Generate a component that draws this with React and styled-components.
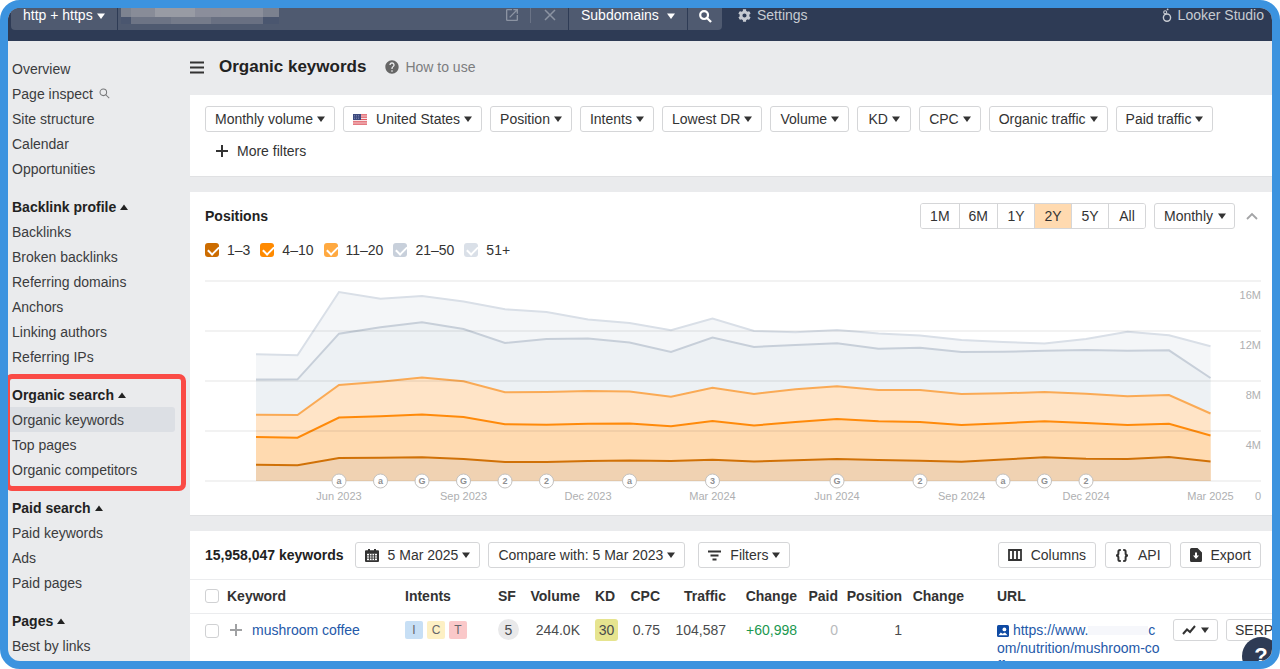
import React, { useState } from "react";
import styled, { createGlobalStyle, css } from "styled-components";
import { MdHelp, MdOpenInNew } from "react-icons/md";
import { FaCog } from "react-icons/fa";

const navGroups = [
  {
    items: [
      "Overview",
      "Page inspect",
      "Site structure",
      "Calendar",
      "Opportunities",
    ],
  },
  {
    title: "Backlink profile",
    items: [
      "Backlinks",
      "Broken backlinks",
      "Referring domains",
      "Anchors",
      "Linking authors",
      "Referring IPs",
    ],
  },
  {
    title: "Organic search",
    marked: true,
    items: ["Organic keywords", "Top pages", "Organic competitors"],
  },
  { title: "Paid search", items: ["Paid keywords", "Ads", "Paid pages"] },
  { title: "Pages", items: ["Best by links"] },
];

const filters = [
  "Monthly volume",
  "United States",
  "Position",
  "Intents",
  "Lowest DR",
  "Volume",
  "KD",
  "CPC",
  "Organic traffic",
  "Paid traffic",
];

const ranges = ["1M", "6M", "1Y", "2Y", "5Y", "All"];

// heights above the baseline, one value for each month
const series = [
  {
    label: "51+",
    box: "#dae0e8",
    line: "#d9dfe7",
    fill: "#f4f6f8",
    values: [
      126.7, 125.7, 189, 182.3, 185, 179.5, 171.7, 169, 161.5, 158, 150.7,
      162.5, 150, 148.7, 151, 147.5, 145.5, 141, 139, 137.5, 142, 149.3, 145.7,
      134.7,
    ],
  },
  {
    label: "21–50",
    box: "#c8d0db",
    line: "#c7cfd9",
    fill: "#edf1f4",
    values: [
      101.5, 101.7, 147.3, 153.7, 158.8, 152, 138, 142, 142.5, 138.5, 129,
      143.5, 134, 136, 137.7, 132.2, 133.3, 129, 129.2, 130.3, 131, 130.2,
      130.7, 103,
    ],
  },
  {
    label: "11–20",
    box: "#ffa940",
    line: "#faaa55",
    fill: "#ffe4c7",
    values: [
      66.3, 66, 96, 99.3, 103.5, 99.7, 88.8, 89, 90, 89.5, 84.3, 93.3, 87, 91.7,
      94.7, 91, 91, 87, 87.7, 89, 87.3, 84.7, 86, 67.5,
    ],
  },
  {
    label: "4–10",
    box: "#ff8a00",
    line: "#ff8a0a",
    fill: "#ffdab0",
    values: [
      44, 43.3, 63.5, 64.7, 66.5, 64, 56.8, 56.2, 57.3, 57.5, 54.8, 60, 55.5,
      59, 62, 59.7, 59, 56, 57.8, 59.7, 58, 56, 57.3, 45.5,
    ],
  },
  {
    label: "1–3",
    box: "#cc6c00",
    line: "#d07107",
    fill: "#f0d2b2",
    values: [
      16.2, 15.8, 23, 23.3, 23.7, 22, 19, 19, 20, 20.5, 20, 21.3, 19.5, 20.7,
      22, 21, 20.3, 19.3, 21.5, 23.8, 22.3, 22, 24, 19.5,
    ],
  },
];

const updates = [
  [2, "a"],
  [3, "a"],
  [4, "G"],
  [5, "G"],
  [6, "2"],
  [7, "2"],
  [9, "a"],
  [11, "3"],
  [14, "G"],
  [16, "2"],
  [18, "a"],
  [19, "G"],
  [20, "2"],
];

const months = [
  [2, "Jun 2023"],
  [5, "Sep 2023"],
  [8, "Dec 2023"],
  [11, "Mar 2024"],
  [14, "Jun 2024"],
  [17, "Sep 2024"],
  [20, "Dec 2024"],
  [23, "Mar 2025"],
];

const BASE = 205;
const xOf = (i) => 51 + i * 41.5;

const Caret = ({ up }) => (
  <CaretSvg width="8" height="6" viewBox="0 0 8 6" aria-hidden="true">
    <path d={up ? "M0 6 4 0.5 8 6Z" : "M0 0.5H8L4 6Z"} fill="currentColor" />
  </CaretSvg>
);

const SearchIcon = ({ size, stroke }) => (
  <svg
    width={size}
    height={size}
    viewBox="0 0 14 14"
    fill="none"
    stroke="currentColor"
    strokeWidth={stroke}
    aria-hidden="true"
  >
    <circle cx="5.5" cy="5.5" r="4.2" />
    <path d="M8.6 8.6 13 13" />
  </svg>
);

const PlusIcon = ({ size }) => (
  <svg width={size} height={size} viewBox="0 0 12 12" aria-hidden="true">
    <path d="M6 0v12M0 6h12" stroke="currentColor" strokeWidth="2" />
  </svg>
);

const LookerIcon = () => (
  <svg
    width="10"
    height="14"
    viewBox="0 0 10 14"
    fill="none"
    stroke="currentColor"
    aria-hidden="true"
  >
    <circle cx="5" cy="9.6" r="3.6" strokeWidth="1.4" />
    <circle cx="3.2" cy="4.2" r="1.5" strokeWidth="1.1" />
    <circle cx="5.6" cy="1.4" r="0.9" fill="currentColor" stroke="none" />
  </svg>
);

const FlagIcon = () => (
  <svg width="14" height="11" viewBox="0 0 14 11" aria-hidden="true">
    <rect width="14" height="11" fill="#f7e4e6" />
    <path
      d="M0 .8h14M0 3.2h14M0 5.5h14M0 7.8h14M0 10.2h14"
      stroke="#e0565f"
      strokeWidth="1.2"
    />
    <rect width="8" height="6" fill="#3d4a7f" />
    <path
      d="M1 1.5h6M1 3h6M1 4.5h6"
      stroke="#8e98bd"
      strokeWidth="0.6"
      strokeDasharray="1 1"
    />
  </svg>
);

const CalendarIcon = () => (
  <svg width="14" height="13" viewBox="0 0 14 13" aria-hidden="true">
    <path
      d="M3 0h2v1.2h4V0h2v1.2h2a1 1 0 0 1 1 1V12a1 1 0 0 1-1 1H1a1 1 0 0 1-1-1V2.2a1 1 0 0 1 1-1h2Z"
      fill="currentColor"
    />
    <path d="M2 4.8h10v6.4H2Z" fill="#fff" />
    <path
      d="M2 6.9h10M2 9.1h10M4.5 4.8v6.4M7 4.8v6.4M9.5 4.8v6.4"
      stroke="currentColor"
      strokeWidth="0.9"
    />
  </svg>
);

const FilterIcon = () => (
  <svg width="13" height="11" viewBox="0 0 13 11" aria-hidden="true">
    <path
      d="M0 1.5h13M2.5 5.5h8M4.5 9.5h4"
      stroke="currentColor"
      strokeWidth="2"
    />
  </svg>
);

const ColumnsIcon = () => (
  <svg width="14" height="12" viewBox="0 0 14 12" aria-hidden="true">
    <path
      d="M1 1h12v10H1ZM5 1v10M9 1v10"
      fill="none"
      stroke="currentColor"
      strokeWidth="1.8"
    />
  </svg>
);

const BracesIcon = () => (
  <svg width="14" height="13" viewBox="0 0 14 13" aria-hidden="true">
    <path
      d="M5.8 1H5Q3.4 1 3.4 2.5V4.6Q3.4 6.5 1 6.5Q3.4 6.5 3.4 8.4V10.5Q3.4 12 5 12H5.8M8.2 1H9Q10.6 1 10.6 2.5V4.6Q10.6 6.5 13 6.5Q10.6 6.5 10.6 8.4V10.5Q10.6 12 9 12H8.2"
      fill="none"
      stroke="currentColor"
      strokeWidth="2"
    />
  </svg>
);

const ExportIcon = () => (
  <svg width="12" height="14" viewBox="0 0 12 14" aria-hidden="true">
    <path
      d="M1.5 0H7.5L12 4.5V12.5a1.5 1.5 0 0 1-1.5 1.5H1.5A1.5 1.5 0 0 1 0 12.5V1.5A1.5 1.5 0 0 1 1.5 0Z"
      fill="currentColor"
    />
    <path d="M5 4.5h2V7.5h2L6 11 3 7.5h2Z" fill="#fff" />
  </svg>
);

const PictureIcon = () => (
  <svg width="12" height="12" viewBox="0 0 12 12" aria-hidden="true">
    <rect width="12" height="12" rx="1.5" fill="#0f4aa3" />
    <circle cx="7.4" cy="4.4" r="1.9" fill="#fff" />
    <path d="M1.5 10.2 3.8 7.6l1.7 1.2L8 7.4l2.5 2.8Z" fill="#fff" />
  </svg>
);

const TrendIcon = () => (
  <svg width="14" height="10" viewBox="0 0 14 10" aria-hidden="true">
    <path
      d="M1 9 5 4.5l3 2.5L13 1"
      fill="none"
      stroke="currentColor"
      strokeWidth="2"
    />
  </svg>
);

const Chart = () => (
  <ChartSvg viewBox="0 0 1056 232" role="img" aria-label="Positions by month">
    {series.map((s) => {
      const line = s.values
        .map((v, i) => `${xOf(i)},${(BASE - v).toFixed(1)}`)
        .join(" ");
      return (
        <g key={s.label}>
          <polygon
            points={`${xOf(0)},${BASE} ${line} ${xOf(23)},${BASE}`}
            fill={s.fill}
          />
          <polyline points={line} fill="none" stroke={s.line} strokeWidth="2" />
        </g>
      );
    })}
    {[5, 55, 105, 155, 205].map((y) => (
      <rect key={y} y={y - 1} width="1056" height="2" fill="#000" opacity="0.05" />
    ))}
    {["16M", "12M", "8M", "4M"].map((label, i) => (
      <AxisText key={label} x="1056" y={23 + i * 50} textAnchor="end">
        {label}
      </AxisText>
    ))}
    <AxisText x="1056" y="224" textAnchor="end">
      0
    </AxisText>
    {months.map(([i, label]) => (
      <AxisText key={label} x={xOf(i)} y="224" textAnchor="middle">
        {label}
      </AxisText>
    ))}
    {updates.map(([i, label]) => (
      <g key={i}>
        <circle cx={xOf(i)} cy={BASE} r="7" fill="#fff" stroke="#c3c1bf" />
        <MarkerText x={xOf(i)} y={BASE + 3} textAnchor="middle">
          {label}
        </MarkerText>
      </g>
    ))}
  </ChartSvg>
);

const App = () => {
  const [range, setRange] = useState("2Y");

  return (
    <Frame>
      <GlobalStyle />
      <TopBar>
        <SearchGroup>
          <TopSelectWrap>
            <TopSelect aria-label="Protocol">
              <option>http + https</option>
            </TopSelect>
            <Caret />
          </TopSelectWrap>
          <UrlField>
            <UrlInput type="text" aria-label="Domain or URL" />
            <Redaction>
              <RedactionTop />
              <RedactionBottom />
            </Redaction>
            <FieldButton type="button" aria-label="Open in new tab">
              <MdOpenInNew size={16} />
            </FieldButton>
            <FieldButton type="button" aria-label="Clear" $divided>
              <svg width="12" height="12" viewBox="0 0 12 12">
                <path
                  d="M1 1 11 11M11 1 1 11"
                  stroke="currentColor"
                  strokeWidth="1.5"
                />
              </svg>
            </FieldButton>
          </UrlField>
          <TopSelectWrap>
            <TopSelect aria-label="Mode" $wide>
              <option>Subdomains</option>
            </TopSelect>
            <Caret />
          </TopSelectWrap>
          <SearchButton type="button" aria-label="Search">
            <SearchIcon size={13} stroke={2.4} />
          </SearchButton>
        </SearchGroup>
        <TopLink href="#settings">
          <FaCog size={13} /> Settings
        </TopLink>
        <TopLink href="#looker" $end>
          <LookerIcon /> Looker Studio
        </TopLink>
      </TopBar>
      <Body>
        <Sidebar>
          {navGroups.map((group, i) => (
            <NavGroup key={i} $marked={group.marked}>
              {group.title && (
                <NavTitle type="button">
                  {group.title} <Caret up />
                </NavTitle>
              )}
              {group.items.map((item) => (
                <NavLink
                  key={item}
                  href="#nav"
                  $active={item === "Organic keywords"}
                >
                  {item}
                  {item === "Page inspect" && (
                    <SearchIcon size={11} stroke={1.3} />
                  )}
                </NavLink>
              ))}
            </NavGroup>
          ))}
        </Sidebar>
        <Main>
          <PageHead>
            <MenuButton type="button" aria-label="Toggle menu">
              <svg width="14" height="13" viewBox="0 0 14 13">
                <path
                  d="M0 1.5h14M0 6.5h14M0 11.5h14"
                  stroke="currentColor"
                  strokeWidth="2"
                />
              </svg>
            </MenuButton>
            <PageTitle>Organic keywords</PageTitle>
            <HelpLink href="#help">
              <MdHelp size={16} /> How to use
            </HelpLink>
          </PageHead>

          <FilterCard>
            <FilterRow>
              {filters.map((label) => (
                <Button key={label} type="button" aria-haspopup="true">
                  {label === "United States" && <FlagIcon />}
                  <span>{label}</span>
                  <Caret />
                </Button>
              ))}
            </FilterRow>
            <MoreButton type="button">
              <PlusIcon size={12} /> More filters
            </MoreButton>
          </FilterCard>

          <ChartCard>
            <ChartHead>
              <CardTitle>Positions</CardTitle>
              <Segments>
                {ranges.map((r) => (
                  <Segment
                    key={r}
                    type="button"
                    $on={r === range}
                    onClick={() => setRange(r)}
                  >
                    {r}
                  </Segment>
                ))}
              </Segments>
              <SelectWrap>
                <Select aria-label="Interval">
                  <option>Monthly</option>
                </Select>
                <Caret />
              </SelectWrap>
              <CollapseButton type="button" aria-label="Collapse">
                <svg width="12" height="8" viewBox="0 0 12 8">
                  <path
                    d="M1 7 6 2l5 5"
                    fill="none"
                    stroke="currentColor"
                    strokeWidth="1.8"
                  />
                </svg>
              </CollapseButton>
            </ChartHead>
            <Legend>
              {[...series].reverse().map((s) => (
                <LegendItem key={s.label}>
                  <Checkbox type="checkbox" defaultChecked $color={s.box} />
                  {s.label}
                </LegendItem>
              ))}
            </Legend>
            <Chart />
          </ChartCard>

          <Card>
            <TableTools>
              <Count>15,958,047 keywords</Count>
              <Button type="button">
                <CalendarIcon />
                <span>5 Mar 2025</span>
                <Caret />
              </Button>
              <Button type="button">
                <span>Compare with: 5 Mar 2023</span>
                <Caret />
              </Button>
              <FiltersSlot>
                <Button type="button">
                  <FilterIcon />
                  <span>Filters</span>
                  <Caret />
                </Button>
              </FiltersSlot>
              <ToolsEnd>
                <Button type="button">
                  <ColumnsIcon />
                  <span>Columns</span>
                </Button>
                <Button type="button">
                  <BracesIcon />
                  <span>API</span>
                </Button>
                <Button type="button">
                  <ExportIcon />
                  <span>Export</span>
                </Button>
              </ToolsEnd>
            </TableTools>
            <Table>
              <colgroup>
                {[37, 178, 93, 28, 54, 40, 40, 66, 71, 41, 64, 62, 209].map(
                  (w, i) => (
                    <Col key={i} $w={w} />
                  )
                )}
                <col />
              </colgroup>
              <thead>
                <tr>
                  <Th $first>
                    <Checkbox type="checkbox" aria-label="Select all" />
                  </Th>
                  <Th>Keyword</Th>
                  <Th>Intents</Th>
                  <Th>SF</Th>
                  <Th $right>Volume</Th>
                  <Th $indent={15}>KD</Th>
                  <Th $right>CPC</Th>
                  <Th $right>Traffic</Th>
                  <Th $right>Change</Th>
                  <Th $right>Paid</Th>
                  <Th $right>Position</Th>
                  <Th $right>Change</Th>
                  <Th $indent={33}>URL</Th>
                  <Th />
                </tr>
              </thead>
              <tbody>
                <tr>
                  <Td $first>
                    <Checkbox type="checkbox" aria-label="Select keyword" />
                  </Td>
                  <Td>
                    <KeywordCell>
                      <PlusIcon size={12} />
                      <Link href="#keyword">mushroom coffee</Link>
                    </KeywordCell>
                  </Td>
                  <Td>
                    <Intents>
                      <Intent $bg="#c7dff5">I</Intent>
                      <Intent $bg="#fdf0c4">C</Intent>
                      <Intent $bg="#fac8c9">T</Intent>
                    </Intents>
                  </Td>
                  <Td>
                    <Features>5</Features>
                  </Td>
                  <Td $right>244.0K</Td>
                  <Td $indent={15}>
                    <Difficulty>30</Difficulty>
                  </Td>
                  <Td $right>0.75</Td>
                  <Td $right>104,587</Td>
                  <Td $right $color="#1a9850">
                    +60,998
                  </Td>
                  <Td $right $color="#b9bbbd">
                    0
                  </Td>
                  <Td $right>1</Td>
                  <Td />
                  <Td $indent={33}>
                    <UrlLink href="#url">
                      <PictureIcon /> https://www.
                      <UrlBlank />c<br />
                      om/nutrition/mushroom-co
                      <br />
                      ffee
                    </UrlLink>
                  </Td>
                  <Td>
                    <Actions>
                      <SmallButton type="button" aria-label="Position history">
                        <TrendIcon />
                        <Caret />
                      </SmallButton>
                      <SmallButton type="button">
                        SERP <Caret />
                      </SmallButton>
                    </Actions>
                  </Td>
                </tr>
              </tbody>
            </Table>
          </Card>
        </Main>
      </Body>
      <HelpBubble type="button">?</HelpBubble>
    </Frame>
  );
};

const GlobalStyle = createGlobalStyle`
  * {
    box-sizing: border-box;
  }
  body {
    margin: 0;
    background: #fff;
  }
  body, button, input, select {
    font-family: "Liberation Sans", Arial, sans-serif;
    font-size: 14px;
    color: #333;
  }
  button {
    cursor: pointer;
  }
  a {
    text-decoration: none;
  }
`;

const Frame = styled.div`
  position: relative;
  height: 100vh;
  display: flex;
  flex-direction: column;
  border: 8px solid #3c93df;
  border-radius: 20px;
  overflow: hidden;
  background: #eaebed;
`;

const CaretSvg = styled.svg`
  flex: none;
`;

const TopBar = styled.header`
  flex: none;
  display: flex;
  align-items: flex-start;
  gap: 16px;
  height: 33px;
  padding: 0 8px 0 3px;
  background: #2e3b55;
`;

const SearchGroup = styled.div`
  display: flex;
  gap: 1px;
  height: 23px;
  margin-top: -1px;
  border-radius: 0 0 4px 4px;
  overflow: hidden;
`;

const topCell = css`
  background: #4f5a70;
  color: #fff;
`;

const TopSelectWrap = styled.div`
  ${topCell}
  position: relative;
  ${CaretSvg} {
    position: absolute;
    right: 12px;
    top: 6px;
    pointer-events: none;
  }
`;

const TopSelect = styled.select`
  appearance: none;
  height: 16px;
  padding: 0 ${(p) => (p.$wide ? 28 : 24)}px 0 12px;
  border: 0;
  background: none;
  color: #fff;
`;

const UrlField = styled.div`
  ${topCell}
  position: relative;
  display: flex;
  align-items: flex-start;
  width: 450px;
`;

const UrlInput = styled.input`
  flex: 1;
  min-width: 0;
  height: 22px;
  border: 0;
  background: none;
  color: #fff;
`;

const Redaction = styled.div`
  position: absolute;
  left: 3px;
  top: 0;
  width: 158px;
`;

const RedactionTop = styled.div`
  height: 10px;
  background: linear-gradient(
    90deg,
    #7d8390 0 10px,
    #888c98 10px 34px,
    #989ba4 34px 74px,
    #8b8e9b 74px 100px,
    #8b8f9b 100px 142px,
    #7b818f 142px
  );
`;

const RedactionBottom = styled.div`
  height: 7px;
  background: linear-gradient(
    90deg,
    #4a566f 0 10px,
    #6d7485 10px 50px,
    #757b8a 50px 90px,
    #697082 90px 142px,
    #4a566f 142px
  );
`;

const FieldButton = styled.button`
  ${topCell}
  display: flex;
  align-items: center;
  justify-content: center;
  width: 38px;
  height: 16px;
  padding: 0;
  border: 0;
  border-left: 1px solid ${(p) => (p.$divided ? "#6a7386" : "transparent")};
  color: #8b93a2;
`;

const SearchButton = styled.button`
  ${topCell}
  display: flex;
  justify-content: center;
  width: 34px;
  padding: 3px 0 0;
  border: 0;
`;

const TopLink = styled.a`
  display: flex;
  align-items: center;
  gap: 6px;
  height: 14px;
  margin-left: ${(p) => (p.$end ? "auto" : 0)};
  color: #c7cbd2;
`;

const Body = styled.div`
  flex: 1;
  min-height: 0;
  display: flex;
`;

const Sidebar = styled.nav`
  flex: none;
  width: 182px;
  padding-top: 15px;
`;

const NavGroup = styled.div`
  position: relative;
  margin-bottom: 13px;
  ${(p) =>
    p.$marked &&
    css`
      &::after {
        content: "";
        position: absolute;
        inset: -8px 4px -9px -3px;
        border: 5px solid #fa4b46;
        border-radius: 7px;
        pointer-events: none;
      }
    `}
`;

const NavTitle = styled.button`
  display: flex;
  align-items: center;
  gap: 4px;
  height: 25px;
  padding: 0 4px;
  border: 0;
  background: none;
  font-weight: bold;
  color: #222;
`;

const NavLink = styled.a`
  display: flex;
  align-items: center;
  gap: 6px;
  height: 25px;
  margin-right: 15px;
  padding: 0 4px;
  border-radius: 0 3px 3px 0;
  color: #3b3c3e;
  background: ${(p) => (p.$active ? "#dcdfe4" : "none")};
  svg {
    color: #77787a;
  }
`;

const Main = styled.main`
  flex: 1;
  min-width: 0;
  overflow: hidden;
`;

const PageHead = styled.div`
  display: flex;
  align-items: center;
  height: 54px;
  padding-bottom: 2px;
`;

const MenuButton = styled.button`
  display: flex;
  padding: 0;
  border: 0;
  background: none;
`;

const PageTitle = styled.h1`
  margin: 0 18px 0 15px;
  font-size: 17px;
  color: #222;
`;

const HelpLink = styled.a`
  display: flex;
  align-items: center;
  gap: 5px;
  color: #7c7d7f;
  svg {
    color: #666;
  }
`;

const Card = styled.section`
  margin-bottom: 15px;
  background: #fff;
  border-bottom: 1px solid #e0e1e3;
`;

const FilterCard = styled(Card)`
  padding: 11px 15px 15px;
`;

const FilterRow = styled.div`
  display: flex;
  flex-wrap: wrap;
  gap: 8px;
`;

const Button = styled.button`
  display: flex;
  align-items: center;
  justify-content: center;
  gap: 4px;
  min-width: 54px;
  height: 26px;
  padding: 0 9px;
  border: 1px solid #d5d6d8;
  border-radius: 3px;
  background: #fff;
  white-space: nowrap;
  svg {
    flex: none;
  }
  svg:first-child {
    margin-right: 5px;
  }
`;

const MoreButton = styled.button`
  display: flex;
  align-items: center;
  gap: 9px;
  height: 20px;
  margin-top: 9px;
  padding: 0 11px;
  border: 0;
  background: none;
`;

const ChartCard = styled(Card)`
  padding: 11px 11px 7px 15px;
`;

const ChartHead = styled.div`
  display: flex;
  align-items: center;
`;

const CardTitle = styled.h2`
  flex: 1;
  margin: 0;
  font-size: 14px;
  color: #222;
`;

const Segments = styled.div`
  display: flex;
  margin-right: 8px;
  border: 1px solid #d5d6d8;
  border-radius: 3px;
  overflow: hidden;
`;

const Segment = styled.button`
  min-width: 37px;
  height: 24px;
  padding: 0 9px;
  border: 0;
  background: ${(p) => (p.$on ? "#ffdab0" : "#fff")};
  & + & {
    border-left: 1px solid #d5d6d8;
  }
`;

const SelectWrap = styled.div`
  position: relative;
  display: flex;
  ${CaretSvg} {
    position: absolute;
    right: 9px;
    top: 10px;
    pointer-events: none;
  }
`;

const Select = styled.select`
  appearance: none;
  height: 26px;
  padding: 0 20px 0 9px;
  border: 1px solid #d5d6d8;
  border-radius: 3px;
  background: #fff;
`;

const CollapseButton = styled.button`
  display: flex;
  margin-left: 8px;
  padding: 3px;
  border: 0;
  background: none;
  color: #a3a4a6;
`;

const Legend = styled.div`
  display: flex;
  gap: 10px;
  margin: 11px 0 16px;
`;

const LegendItem = styled.label`
  display: flex;
  align-items: center;
  gap: 8px;
  height: 20px;
`;

const Checkbox = styled.input`
  appearance: none;
  position: relative;
  display: block;
  flex: none;
  width: 14px;
  height: 14px;
  margin: 0;
  border: 1px solid #d0d1d3;
  border-radius: 3px;
  background: #fff;
  &:checked {
    border: 0;
    background: ${(p) => p.$color};
  }
  &:checked::after {
    content: "";
    position: absolute;
    left: 3px;
    top: 3px;
    width: 9px;
    height: 5px;
    border: solid #fff;
    border-width: 0 0 2px 2px;
    transform: rotate(-45deg);
  }
`;

const ChartSvg = styled.svg`
  display: block;
  width: 100%;
  overflow: visible;
`;

const AxisText = styled.text`
  font-size: 11px;
  fill: #aeafb1;
`;

const MarkerText = styled.text`
  font-size: 9px;
  font-weight: bold;
  fill: #8f9092;
`;

const TableTools = styled.div`
  display: flex;
  align-items: center;
  gap: 8px;
  padding: 11px 11px 11px 15px;
  border-bottom: 1px solid #ebecee;
`;

const Count = styled.strong`
  margin-right: 3px;
  color: #222;
`;

const FiltersSlot = styled.div`
  margin-left: 5px;
`;

const ToolsEnd = styled.div`
  display: flex;
  gap: 9px;
  margin-left: auto;
`;

const Table = styled.table`
  width: 100%;
  table-layout: fixed;
  border-collapse: collapse;
`;

const Col = styled.col`
  width: ${(p) => p.$w}px;
`;

const Th = styled.th`
  height: 33px;
  padding: 0 0 0 ${(p) => (p.$first ? 15 : p.$indent || 0)}px;
  border-bottom: 1px solid #ebecee;
  text-align: ${(p) => (p.$right ? "right" : "left")};
  white-space: nowrap;
`;

const Td = styled.td`
  padding: 5px 0 0 ${(p) => (p.$first ? 15 : p.$indent || 0)}px;
  line-height: 22px;
  vertical-align: top;
  white-space: nowrap;
  text-align: ${(p) => (p.$right ? "right" : "left")};
  color: ${(p) => p.$color || "#4a4b4d"};
  > ${Checkbox} {
    margin-top: 5px;
  }
`;

const KeywordCell = styled.div`
  display: flex;
  align-items: center;
  gap: 10px;
  padding-left: 3px;
  color: #a0a1a3;
`;

const Link = styled.a`
  color: #2459a9;
`;

const Intents = styled.div`
  display: flex;
  align-items: center;
  gap: 4px;
  height: 22px;
`;

const Intent = styled.span`
  width: 18px;
  border-radius: 2px;
  background: ${(p) => p.$bg};
  font-size: 12px;
  line-height: 18px;
  text-align: center;
  color: #65666a;
`;

const Features = styled.span`
  display: block;
  width: 21px;
  height: 21px;
  border-radius: 50%;
  background: #e9e9ea;
  text-align: center;
`;

const Difficulty = styled.span`
  display: block;
  width: 23px;
  height: 22px;
  border-radius: 3px;
  background: #e6e48f;
  text-align: center;
`;

const UrlLink = styled.a`
  display: block;
  padding-top: 2px;
  line-height: 18px;
  color: #2459a9;
  svg {
    vertical-align: -2px;
  }
`;

const UrlBlank = styled.span`
  display: inline-block;
  width: 60px;
  height: 9px;
  background: #f6f7fb;
`;

const Actions = styled.div`
  display: flex;
  gap: 8px;
`;

const SmallButton = styled.button`
  display: flex;
  align-items: center;
  gap: 5px;
  height: 22px;
  padding: 0 8px;
  border: 1px solid #d5d6d8;
  border-radius: 3px;
  background: #fff;
`;

const HelpBubble = styled.button`
  position: absolute;
  right: -8px;
  bottom: -14px;
  width: 38px;
  height: 38px;
  padding: 0;
  border: 0;
  border-radius: 50%;
  background: #2e3b55;
  color: #fff;
  font-size: 22px;
  font-weight: bold;
`;

export default App;
